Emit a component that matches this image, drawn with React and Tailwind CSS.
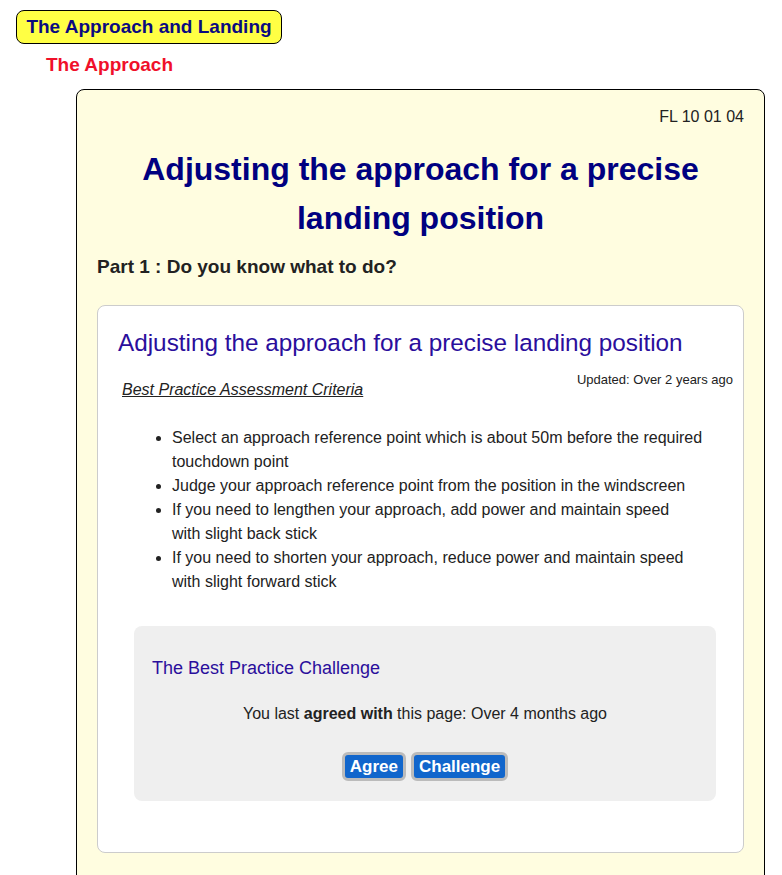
import React from 'react';

const criteria = [
  ['Select an approach reference point which is about 50m before the required touchdown point'],
  ['Judge your approach reference point from the position in the windscreen'],
  ['If you need to lengthen your approach, add power and maintain speed', 'with slight back stick'],
  ['If you need to shorten your approach, reduce power and maintain speed', 'with slight forward stick'],
];

const App = () => {
  return (
    <div className="min-h-[875px] bg-white font-['Liberation_Sans',Arial,sans-serif] text-[#222] overflow-hidden">
      {/* Section pill */}
      <div className="pt-[10px] pl-4">
        <div className="inline-block h-[34px] w-[266px] rounded-lg border border-black bg-[#ffff44] text-center text-[19px] font-bold leading-[32px] text-[#0a0a80]">
          The Approach and Landing
        </div>
      </div>

      {/* Subsection */}
      <div className="pl-[46px] pt-[10px] text-[19px] font-bold leading-[22px] text-[#f0102a]">The Approach</div>

      {/* Main panel */}
      <div className="ml-[76px] mr-[17px] mt-[13px] h-[900px] rounded-t-lg border border-black bg-[#fffde0] px-5">
        <div className="pt-[17px] text-right text-[16px] leading-[20px]">FL 10 01 04</div>

        <h1 className="mt-[18px] px-8 text-center text-[32px] font-bold leading-[49px] text-[#000080]">
          Adjusting the approach for a precise landing position
        </h1>

        <div className="mt-[12px] text-[19px] font-bold leading-[24px]">Part 1 : Do you know what to do?</div>

        {/* White card */}
        <div className="mt-[26px] h-[548px] rounded-lg border border-[#ccc] bg-white px-5">
          <h2 className="pt-[22px] text-[24.3px] leading-[30px] text-[#2a0e9c]">
            Adjusting the approach for a precise landing position
          </h2>

          <div className="flex items-start justify-between">
            <span className="mt-[22px] ml-1 text-[16px] italic leading-[20px] underline">Best Practice Assessment Criteria</span>
            <span className="mt-[14px] -mr-[10px] text-[13px] leading-[16px]">Updated: Over 2 years ago</span>
          </div>

          <ul className="mt-[26px] ml-[54px] mr-[16px] list-disc text-[16px] leading-[24px]">
            {criteria.map((parts) => (
              <li key={parts[0]}>
                {parts[0]}
                {parts[1] && (
                  <>
                    <br />
                    {parts[1]}
                  </>
                )}
              </li>
            ))}
          </ul>

          {/* Challenge box */}
          <div className="ml-4 mr-[7px] mt-[32px] h-[175px] rounded-lg bg-[#efefef] px-[18px]">
            <div className="pt-[30px] text-[18px] leading-[24px] text-[#2a0e9c]">The Best Practice Challenge</div>
            <div className="mt-[24px] text-center text-[16px] leading-[20px]">
              You last <b>agreed with</b> this page: Over 4 months ago
            </div>
            <div className="mt-[28px] flex justify-center gap-[5px]">
              <button className="h-[29px] rounded-md border-[3px] border-[#bbb] bg-[#1166cc] px-[5px] text-[17px] font-bold leading-[23px] text-white">
                Agree
              </button>
              <button className="h-[29px] rounded-md border-[3px] border-[#bbb] bg-[#1166cc] px-[5px] text-[17px] font-bold leading-[23px] text-white">
                Challenge
              </button>
            </div>
          </div>
        </div>
      </div>
    </div>
  );
};

export default App;
